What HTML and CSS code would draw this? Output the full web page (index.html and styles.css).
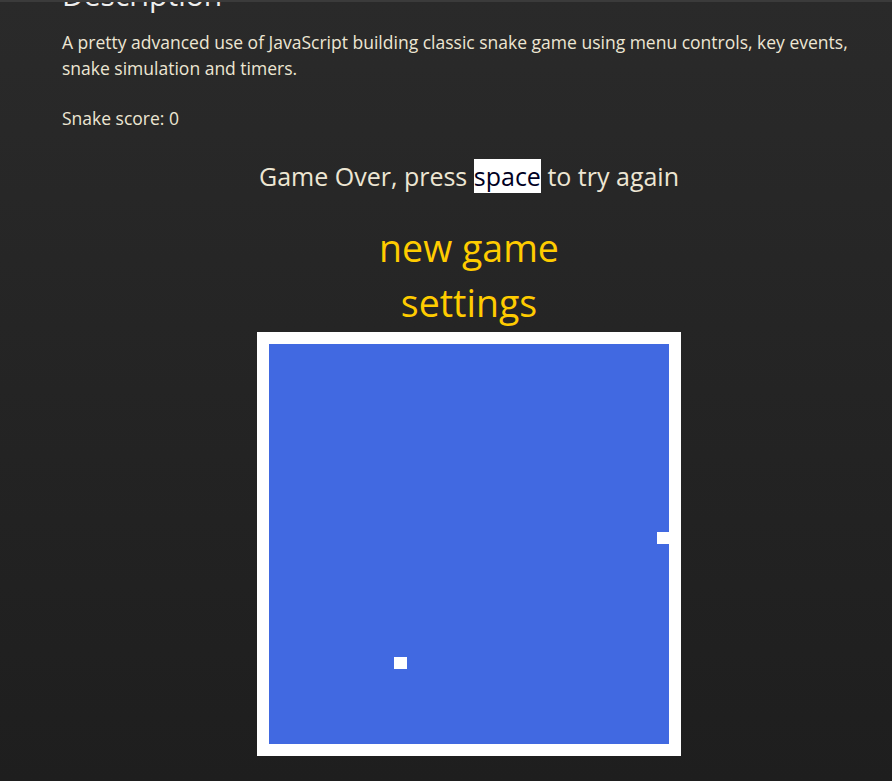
FILE: index.html
```html
<!DOCTYPE html>
<html lang="en">
<head>
<meta charset="utf-8">
<title>Snake</title>
<link rel="stylesheet" href="styles.css">
</head>
<body>
<main class="page">
  <h2 class="title">Description</h2>
  <p class="desc">A pretty advanced use of JavaScript building classic snake game using menu controls, key events, snake simulation and timers.</p>
  <p class="score">Snake score: 0</p>
  <div class="game">
    <p class="status">Game Over, press <span class="key">space</span> to try again</p>
    <ul class="menu">
      <li class="menu-item">new game</li>
      <li class="menu-item">settings</li>
    </ul>
    <div class="board">
      <div class="field">
        <div class="cell" style="left:387.5px;top:187.5px"></div>
        <div class="cell" style="left:125px;top:312.5px"></div>
      </div>
    </div>
  </div>
</main>
</body>
</html>
```

FILE: styles.css
```css
html, body {
  margin: 0;
  padding: 0;
}
body {
  min-height: 781px;
  background: linear-gradient(#2a2a2a, #1e1e1e);
  border-top: 2px solid #3b3b3b;
  box-sizing: border-box;
  font-family: "Open Sans", "DejaVu Sans", sans-serif;
  color: #ede6d3;
  overflow: hidden;
}
.page {
  padding: 0 16px 0 62px;
}
.title {
  margin: -25px 0 0;
  font-size: 30px;
  font-weight: 400;
  line-height: 36px;
  color: #eeeeee;
}
.desc {
  margin: 16px 0 0;
  font-size: 17.5px;
  line-height: 26px;
}
.score {
  margin: 24px 0 0;
  font-size: 17.5px;
  line-height: 26px;
}
.game {
  display: flex;
  flex-direction: column;
  align-items: center;
  margin-top: 29px;
}
.status {
  margin: 0;
  font-size: 25px;
  line-height: 32px;
}
.key {
  background: #ffffff;
  color: #000022;
}
.menu {
  list-style: none;
  margin: 28px 0 0;
  padding: 0;
  text-align: center;
}
.menu-item {
  font-size: 37.5px;
  line-height: 55px;
  color: #ffcc00;
}
.board {
  margin-top: 2px;
  background: #ffffff;
  padding: 12px;
}
.field {
  position: relative;
  width: 400px;
  height: 400px;
  background: #4169e1;
}
.cell {
  position: absolute;
  width: 12.5px;
  height: 12.5px;
  background: #ffffff;
}
```
